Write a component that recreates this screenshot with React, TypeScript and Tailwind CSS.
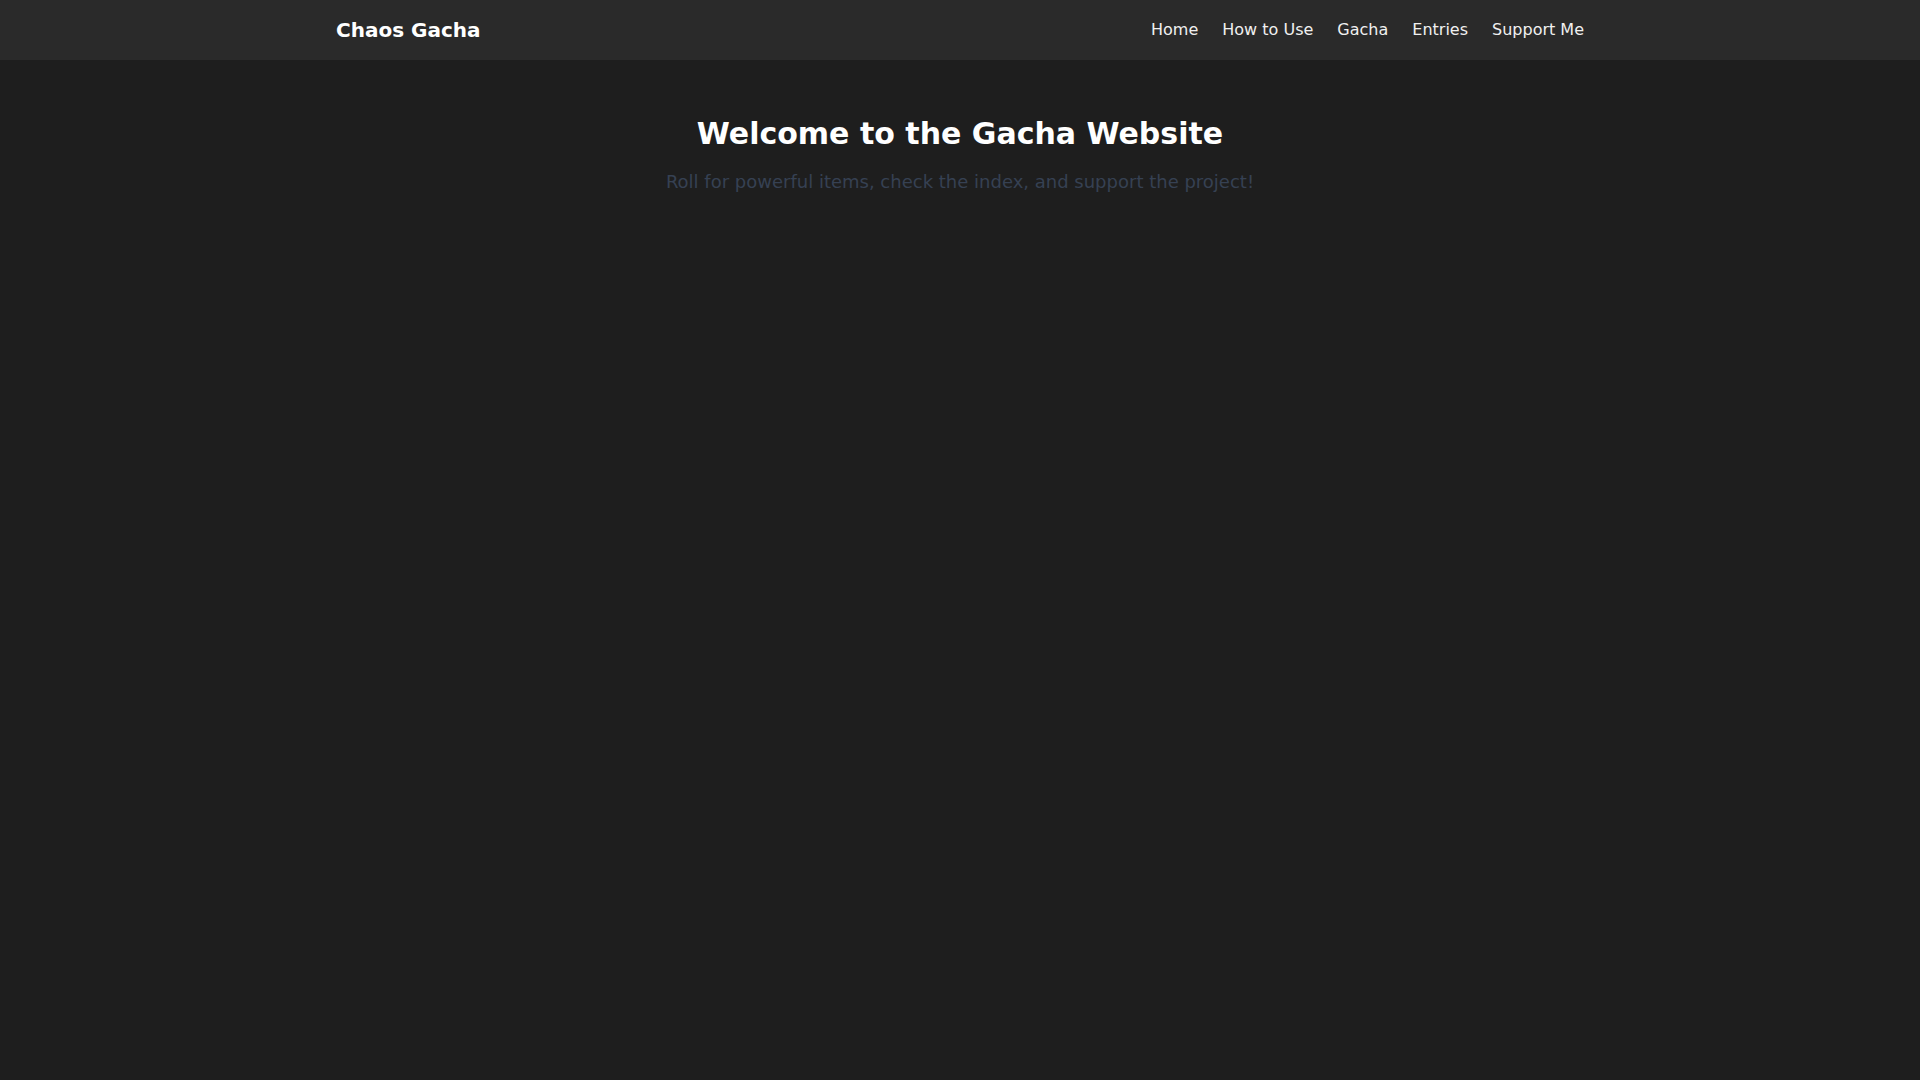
import React from "react";

export default function App() {
  const links = ["Home", "How to Use", "Gacha", "Entries", "Support Me"];
  return (
    <div
      className="min-h-screen bg-[#1e1e1e] text-white"
      style={{ fontFamily: '"DejaVu Sans", sans-serif' }}
    >
      <nav className="bg-[#2a2a2a] h-[60px]">
        <div className="max-w-7xl mx-auto px-4 h-full flex items-center justify-between">
          <span className="text-xl font-bold">Chaos Gacha</span>
          <div className="flex items-center gap-6 text-base text-[#f0f0f0]">
            {links.map((l) => (
              <a key={l} href="#" className="hover:text-gray-300">
                {l}
              </a>
            ))}
          </div>
        </div>
      </nav>
      <main className="max-w-7xl mx-auto px-4 pt-[56px] text-center">
        <h1 className="text-3xl font-bold">Welcome to the Gacha Website</h1>
        <p className="mt-4 text-lg text-gray-700">
          Roll for powerful items, check the index, and support the project!
        </p>
      </main>
    </div>
  );
}
